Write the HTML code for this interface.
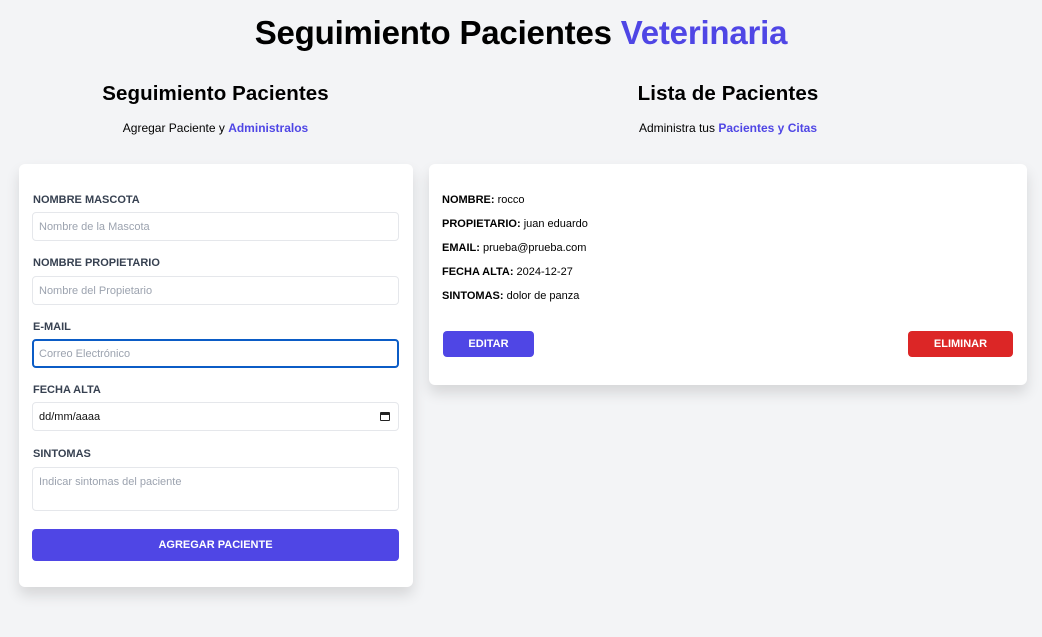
<!DOCTYPE html>
<html><head><meta charset="utf-8"><style>
*{box-sizing:border-box;margin:0;padding:0}
body{width:1042px;height:637px;background:#f3f4f6;font-family:"Liberation Sans",sans-serif;position:relative;overflow:hidden;color:#000}
h1{position:absolute;left:0;width:1042px;top:14px;text-align:center;font-size:33px;font-weight:900;letter-spacing:-0.2px}
.in{color:#4f46e5}
h2{position:absolute;font-size:20.5px;font-weight:900;text-align:center;letter-spacing:0.1px}
.sub{position:absolute;font-size:12px;text-align:center}
.sub b{color:#4f46e5}
.card{position:absolute;background:#fff;border-radius:6px;box-shadow:0 8px 14px rgba(0,0,0,.12)}
.lab{position:absolute;left:14px;font-size:11px;font-weight:700;color:#374151}
.inp{position:absolute;left:13px;width:367px;height:29px;border:1px solid #e5e7eb;border-radius:4px;font-size:11px;color:#9ca3af;padding:8px 6px}
.row{position:absolute;left:13px;font-size:11px}
.btn{position:absolute;color:#fff;font-weight:700;font-size:11px;text-align:center;border-radius:4px}
</style></head><body>
<h1>Seguimiento Pacientes <span class="in">Veterinaria</span></h1>
<h2 style="left:18px;width:395px;top:82px">Seguimiento Pacientes</h2>
<div class="sub" style="left:18px;width:395px;top:121px">Agregar Paciente y <b>Administralos</b></div>
<h2 style="left:429px;width:598px;top:82px">Lista de Pacientes</h2>
<div class="sub" style="left:429px;width:598px;top:121px">Administra tus <b>Pacientes y Citas</b></div>

<div class="card" style="left:19px;top:164px;width:394px;height:423px">
<div class="lab" style="top:30px">NOMBRE MASCOTA</div>
<div class="inp" style="top:48px">Nombre de la Mascota</div>
<div class="lab" style="top:93px">NOMBRE PROPIETARIO</div>
<div class="inp" style="top:112px">Nombre del Propietario</div>
<div class="lab" style="top:157px">E-MAIL</div>
<div class="inp" style="top:175px;border:2px solid #0b5cc6;padding:7px 5px">Correo Electrónico</div>
<div class="lab" style="top:220px">FECHA ALTA</div>
<div class="inp" style="top:238px;color:#111">dd/mm/aaaa<span style="position:absolute;right:8px;top:9px;width:10px;height:9px;border:1.5px solid #222;border-top-width:3px;border-radius:1px"></span></div>
<div class="lab" style="top:284px">SINTOMAS</div>
<div class="inp" style="top:303px;height:44px">Indicar sintomas del paciente</div>
<div class="btn" style="left:13px;top:365px;width:367px;height:32px;line-height:32px;background:#4f46e5">AGREGAR PACIENTE</div>
</div>

<div class="card" style="left:429px;top:164px;width:598px;height:221px">
<div class="row" style="top:30px"><b>NOMBRE:</b> rocco</div>
<div class="row" style="top:54px"><b>PROPIETARIO:</b> juan eduardo</div>
<div class="row" style="top:78px"><b>EMAIL:</b> prueba@prueba.com</div>
<div class="row" style="top:102px"><b>FECHA ALTA:</b> 2024-12-27</div>
<div class="row" style="top:126px"><b>SINTOMAS:</b> dolor de panza</div>
<div class="btn" style="left:14px;top:167px;width:91px;height:26px;line-height:27px;background:#4f46e5">EDITAR</div>
<div class="btn" style="left:479px;top:167px;width:105px;height:26px;line-height:27px;background:#dc2626">ELIMINAR</div>
</div>
</body></html>
